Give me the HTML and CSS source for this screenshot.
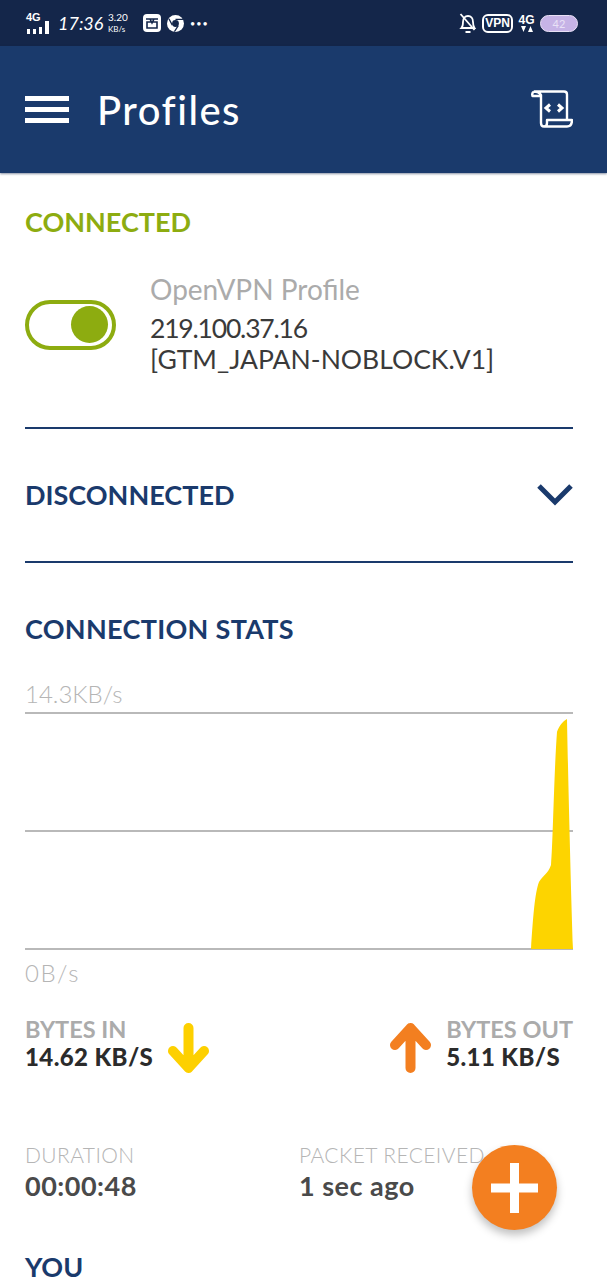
FILE: index.html
```html
<!DOCTYPE html>
<html>
<head>
    <title>Profiles</title>
    <link rel="stylesheet" href="styles.css">
</head>
<body>
    <div class="status-bar">
        <div class="status-left">
            <div class="signal">
                <span class="signal-label">4G</span>
                <svg width="24" height="13" viewBox="0 0 24 13"><path fill="#fff" d="M0 8h3v5H0zM6 8h3v5H6zM12 6h3v7h-3zM18 0h4v13h-4z"/></svg>
            </div>
            <span class="clock">17:36</span>
            <div class="speed"><span>3.20</span><span class="speed-unit">KB/s</span></div>
            <svg class="mail-icon" width="18" height="18" viewBox="0 0 18 18"><rect width="18" height="18" rx="4" fill="#fff"/><path d="M3 5h12M4 8h10v6H4zM7 5l2 4 2-4" fill="none" stroke="#14264a" stroke-width="1.6"/></svg>
            <svg class="chrome-icon" width="17" height="17" viewBox="0 0 16 16"><circle cx="8" cy="8" r="8" fill="#fff"/><circle cx="8" cy="8" r="3.2" fill="#14264a"/><path d="M8 4.2h7M5 9.5 1.8 3.5M10.6 10 7 15.6" stroke="#14264a" stroke-width="1.2"/></svg>
            <span class="dots">•••</span>
        </div>
        <div class="status-right">
            <svg width="19" height="22" viewBox="0 0 18 22"><path d="M3 16c1.500-1.500 1.500-3 1.500-6 0-3.500 2-6 5-6s5 2.500 5 6c0 3 .5 4.500 1.500 6zM7 20h5" fill="none" stroke="#fff" stroke-width="1.800"/><path d="M2 2l14 16" stroke="#fff" stroke-width="1.800"/></svg>
            <span class="vpn-badge">VPN</span>
            <div class="net">
                <span class="net-label">4G</span>
                <svg width="12" height="6" viewBox="0 0 12 6"><path fill="#fff" d="M0 0h5L2.500 6zM7 6h5L9.500 0z"/></svg>
            </div>
            <div class="battery"><span>42</span></div>
        </div>
    </div>

    <header class="app-bar">
        <div class="menu-icon"><span></span><span></span><span></span></div>
        <h1 class="app-title">Profiles</h1>
        <svg class="log-icon" width="42" height="38" viewBox="0 0 42 38">
            <path d="M3 1.500H33Q36 1.500 36 4.500V30M3 1.500Q8 1.500 10 5V33Q10 36.500 13 36.500H36Q41 36.500 41 30H16V33Q16 36.500 13 36.500M3 1.500Q.5 3 1.500 6H10" fill="none" stroke="#fff" stroke-width="2.400" stroke-linejoin="round"/>
            <path d="M19 14.500l-4 3.500 4 3.500M27 14.500l4 3.500-4 3.500" fill="none" stroke="#fff" stroke-width="3"/>
        </svg>
    </header>

    <main class="content">
        <section class="connected-section">
            <h2 class="section-title green">CONNECTED</h2>
            <div class="profile-row">
                <div class="toggle"><span class="toggle-knob"></span></div>
                <div class="profile-info">
                    <div class="profile-name">OpenVPN Profile</div>
                    <div class="profile-server"><span class="profile-ip">219.100.37.16</span><br>[GTM_JAPAN-NOBLOCK.V1]</div>
                </div>
            </div>
        </section>

        <section class="disconnected-section">
            <h2 class="section-title">DISCONNECTED</h2>
            <svg width="36" height="24" viewBox="0 0 36 24"><path d="M2 3l16 16L34 3" fill="none" stroke="#1a3a6c" stroke-width="5"/></svg>
        </section>

        <section class="stats-section">
            <h2 class="section-title stats-title">CONNECTION STATS</h2>
            <div class="chart-label top-label">14.3KB/s</div>
            <svg class="chart" width="548" height="238" viewBox="0 0 548 238">
                <path d="M0 1h548M0 119h548M0 237h548" stroke="#a3a3a3" stroke-width="1.300" fill="none"/>
                <path d="M506 237C508 205 510 180 514 170C518 163 523 162 526 153C528 130 529 60 532 20C534 14 538 9 542 7C543 60 546 180 548 237Z" fill="#fdd400"/>
            </svg>
            <div class="chart-label bottom-label">0B/s</div>

            <div class="bytes-row">
                <div class="bytes-item">
                    <div>
                        <div class="bytes-label">BYTES IN</div>
                        <div class="bytes-value">14.62 KB/S</div>
                    </div>
                    <svg class="bytes-arrow" width="41" height="50" viewBox="0 0 41 50"><path d="M20.500 5v40M5 28l15.500 17L36 28" fill="none" stroke="#fdd000" stroke-width="10" stroke-linecap="round" stroke-linejoin="round"/></svg>
                </div>
                <div class="bytes-item">
                    <svg class="bytes-arrow" width="41" height="50" viewBox="0 0 41 50"><path d="M20.500 45V5M5 22 20.500 5 36 22" fill="none" stroke="#f37f20" stroke-width="10" stroke-linecap="round" stroke-linejoin="round"/></svg>
                    <div>
                        <div class="bytes-label">BYTES OUT</div>
                        <div class="bytes-value">5.11 KB/S</div>
                    </div>
                </div>
            </div>

            <div class="info-row">
                <div class="info-item">
                    <div class="info-label">DURATION</div>
                    <div class="info-value">00:00:48</div>
                </div>
                <div class="info-item">
                    <div class="info-label">PACKET RECEIVED</div>
                    <div class="info-value">1 sec ago</div>
                </div>
            </div>

            <h2 class="section-title you-title">YOU</h2>
        </section>
    </main>

    <button class="add-button">
        <svg width="47" height="50" viewBox="0 0 47 50"><path d="M23.500 0v50M0 25h47" stroke="#fff" stroke-width="9"/></svg>
    </button>
</body>
</html>
```

FILE: styles.css
```css
html, body {
    height: 1280px;
    overflow: hidden;
}

body {
    margin: 0;
    position: relative;
    background-color: #FFF;
    font-family: "Lato", "Open Sans", sans-serif;
}

.status-bar {
    height: 46px;
    background-color: #14264A;
    color: #FFF;
    display: flex;
    justify-content: space-between;
    align-items: center;
    padding: 0 29px 0 26px;
    box-sizing: border-box;
}

.status-left,
.status-right {
    display: flex;
    align-items: center;
}

.signal {
    display: flex;
    flex-direction: column;
    width: 26px;
    height: 22px;
    position: relative;
}

.signal-label {
    font: bold 11px/10px "Liberation Sans", sans-serif;
}

.signal svg {
    position: absolute;
    left: 1px;
    top: 9px;
}

.clock {
    font: italic 400 18px "Lato", sans-serif;
    margin-left: 6px;
    width: 44px;
    white-space: nowrap;
}

.speed {
    display: flex;
    flex-direction: column;
    font: 10px/12px "Lato", sans-serif;
    margin-left: 6px;
    width: 30px;
}

.speed-unit {
    font-size: 8px;
}

.mail-icon {
    margin-left: 5px;
}

.chrome-icon {
    margin-left: 6px;
}

.dots {
    font-size: 9px;
    letter-spacing: 1px;
    margin-left: 6px;
}

.status-right {
    gap: 5px;
}

.vpn-badge {
    border: 2px solid #FFF;
    border-radius: 6px;
    font: bold 12px/15px "Liberation Sans", sans-serif;
    width: 27px;
    text-align: center;
}

.net {
    display: flex;
    flex-direction: column;
    align-items: center;
    width: 17px;
    font: bold 12px/12px "Liberation Sans", sans-serif;
}

.battery {
    width: 36px;
    height: 15px;
    border: 1px solid #E8E0F5;
    border-radius: 9px;
    background-color: #C6B3E6;
    color: #E9E2F6;
    font-size: 11px;
    line-height: 15px;
    text-align: center;
}

.app-bar {
    height: 127px;
    background-color: #1A3A6C;
    color: #FFF;
    display: flex;
    align-items: center;
    padding: 0 34px 0 25px;
    box-shadow: 0 1px 2px rgba(20, 38, 74, 0.5);
    position: relative;
}

.menu-icon {
    width: 44px;
    display: flex;
    flex-direction: column;
    gap: 6px;
}

.menu-icon span {
    height: 5px;
    background-color: #FFF;
}

.app-title {
    font-size: 40px;
    font-weight: 500;
    letter-spacing: 1.500px;
    margin: 0 0 0 28px;
    flex: 1;
}

.log-icon {
    margin-top: -1px;
}

.content {
    padding: 0 34px 0 25px;
}

.section-title {
    font-size: 27px;
    line-height: 30px;
    font-weight: 700;
    color: #1A3A6C;
    margin: 0;
}

.stats-title {
    letter-spacing: .3px;
}

.green {
    color: #8DAC10;
}

.connected-section {
    padding-top: 34px;
    box-sizing: border-box;
    border-bottom: 2px solid #1A3A6C;
    height: 256px;
}

.profile-row {
    display: flex;
    align-items: center;
    margin-top: 35px;
}

.toggle {
    width: 91px;
    height: 50px;
    margin-top: 2px;
    box-sizing: border-box;
    border: 4px solid #8DAC10;
    border-radius: 25px;
    display: flex;
    align-items: center;
    justify-content: flex-end;
    padding-right: 4px;
}

.toggle-knob {
    width: 37px;
    height: 37px;
    border-radius: 50%;
    background-color: #8DAC10;
}

.profile-info {
    margin-left: 34px;
}

.profile-name {
    font-size: 28px;
    line-height: 34px;
    color: #ABABAB;
}

.profile-server {
    font-size: 26.500px;
    line-height: 31px;
    color: #3A3A3A;
    margin-top: 7px;
    white-space: nowrap;
}

.profile-ip {
    letter-spacing: -1.200px;
}

.disconnected-section {
    height: 134px;
    box-sizing: border-box;
    border-bottom: 2px solid #1A3A6C;
    display: flex;
    justify-content: space-between;
    align-items: center;
}

.stats-section {
    padding-top: 51px;
}

.chart-label {
    font-size: 24px;
    line-height: 26px;
    color: #B5B5B5;
    font-weight: 300;
}

.top-label {
    margin-top: 37px;
}

.chart {
    display: block;
    margin-top: 5px;
}

.bottom-label {
    margin-top: 10px;
    letter-spacing: 1.500px;
}

.bytes-row {
    display: flex;
    justify-content: space-between;
    margin-top: 29px;
}

.bytes-item {
    display: flex;
    align-items: flex-start;
    gap: 15px;
}

.bytes-arrow {
    margin-top: 8px;
}

.bytes-label {
    font-size: 23.500px;
    line-height: 28px;
    font-weight: 700;
    color: #ABABAB;
}

.bytes-value {
    font-size: 24px;
    line-height: 28px;
    font-weight: 900;
    letter-spacing: .4px;
    color: #2B2B2B;
}

.info-row {
    display: flex;
    margin-top: 68px;
}

.info-item {
    width: 274px;
}

.info-label {
    font-size: 21px;
    line-height: 28px;
    font-weight: 300;
    letter-spacing: .4px;
    color: #B5B5B5;
}

.info-value {
    font-size: 27px;
    line-height: 33px;
    font-weight: 700;
    letter-spacing: .5px;
    color: #4A4A4A;
}

.you-title {
    margin-top: 50px;
}

.add-button {
    position: absolute;
    left: 472px;
    top: 1145px;
    width: 85px;
    height: 85px;
    border: none;
    border-radius: 50%;
    background-color: #F37F20;
    box-shadow: 0 5px 8px rgba(0, 0, 0, 0.25);
    display: flex;
    align-items: center;
    justify-content: center;
    padding: 0;
}
```
